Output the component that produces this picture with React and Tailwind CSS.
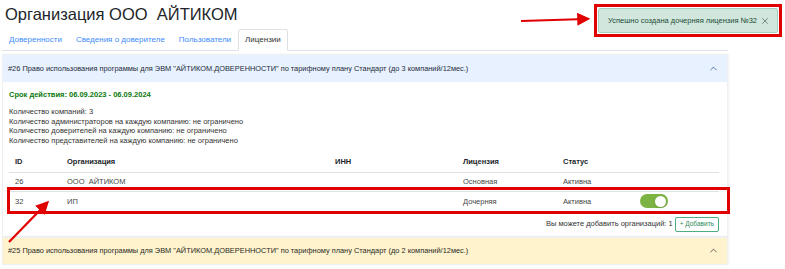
import { ChevronUp, X } from 'lucide-react';

const rows = [
  { id: 26, org: 'ООО  АЙТИКОМ', inn: '', lic: 'Основная', status: 'Активна', toggle: false },
  { id: 32, org: 'ИП', inn: '', lic: 'Дочерняя', status: 'Активна', toggle: true },
];

const limits = [
  'Количество компаний: 3',
  'Количество администраторов на каждую компанию: не ограничено',
  'Количество доверителей на каждую компанию: не ограничено',
  'Количество представителей на каждую компанию: не ограничено',
];

const Toggle = () => (
  <div className="w-[28px] h-[14px] rounded-full bg-[#7cb342] flex items-center justify-end px-[2px]">
    <div className="w-[11px] h-[11px] rounded-full bg-white shadow-sm" />
  </div>
);

export default function App() {
  return (
    <div
      className="relative w-[785px] h-[269px] overflow-hidden bg-white text-[#212529]"
      style={{ fontFamily: '"Liberation Sans", Arial, sans-serif' }}
    >
      <h1 className="pl-[5px] pt-[1px] text-[16.5px] leading-[26px] whitespace-pre">Организация ООО  АЙТИКОМ</h1>

      <div className="ml-[2px] w-[726px]">
        {/* tabs */}
        <div className="flex border-b border-[#dee2e6] mt-[2px] text-[8px] leading-[19px]">
          <div className="px-[6px] text-[#3d8bfd] border border-transparent">Доверенности</div>
          <div className="px-[6px] text-[#3d8bfd] border border-transparent">Сведения о доверителе</div>
          <div className="px-[6px] text-[#3d8bfd] border border-transparent">Пользователи</div>
          <div className="px-[6px] text-[#333] bg-white border border-[#dee2e6] border-b-white rounded-t-[3px] -mb-px">Лицензии</div>
        </div>

        {/* license 26 */}
        <div className="mt-[3px] border border-[#eef0f2] shadow-[1px_0_2px_rgba(0,0,0,0.06)]">
          <div className="h-[27px] bg-[#e7f1ff] flex items-center justify-between pl-[5px] pr-[8px] text-[7.4px] text-[#1e2b3a]">
            <span>#26 Право использования программы для ЭВМ "АЙТИКОМ.ДОВЕРЕННОСТИ" по тарифному плану Стандарт (до 3 компаний/12мес.)</span>
            <ChevronUp className="w-[11px] h-[11px] text-[#4a6a90]" strokeWidth={2} />
          </div>
          <div className="px-[6px] pt-[7px] pb-[4px] text-[7.5px]">
            <div className="font-bold text-[#0b7a0b] leading-[12px]">Срок действия: 06.09.2023 - 06.09.2024</div>
            <div className="mt-[6px] leading-[9.5px] text-[#333]">
              {limits.map((l) => (
                <div key={l}>{l}</div>
              ))}
            </div>

            <table className="w-[710px] mt-[7px] border-collapse text-[7.5px]">
              <thead>
                <tr className="h-[20px] border-b border-[#dee2e6] text-left">
                  <th className="pl-[6px] w-[58px] font-bold">ID</th>
                  <th className="w-[268px] font-bold">Организация</th>
                  <th className="w-[128px] font-bold">ИНН</th>
                  <th className="w-[100px] font-bold">Лицензия</th>
                  <th className="w-[77px] font-bold">Статус</th>
                  <th />
                </tr>
              </thead>
              <tbody className="text-[#444]">
                {rows.map((r) => (
                  <tr key={r.id} className="h-[19.5px] border-b border-[#dee2e6]">
                    <td className="pl-[6px]">{r.id}</td>
                    <td className="whitespace-pre">{r.org}</td>
                    <td>{r.inn}</td>
                    <td>{r.lic}</td>
                    <td>{r.status}</td>
                    <td>{r.toggle && <Toggle />}</td>
                  </tr>
                ))}
              </tbody>
            </table>

            <div className="w-[710px] flex justify-end items-center gap-[2px] mt-[5px]">
              <span className="text-[7.5px] text-[#333]">Вы можете добавить организаций: 1</span>
              <button className="h-[15px] px-[4px] border border-[#4caf7d] rounded-[2px] text-[6.5px] text-[#2e8b57] leading-none">
                + Добавить
              </button>
            </div>
          </div>
        </div>

        {/* license 25 */}
        <div className="border border-[#eef0f2] shadow-[1px_0_2px_rgba(0,0,0,0.06)]">
          <div className="h-[26px] bg-[#fff3cd] flex items-center justify-between pl-[5px] pr-[8px] text-[7.4px] text-[#2a2a1e]">
            <span>#25 Право использования программы для ЭВМ "АЙТИКОМ.ДОВЕРЕННОСТИ" по тарифному плану Стандарт (до 2 компаний/12мес.)</span>
            <ChevronUp className="w-[11px] h-[11px] text-[#555]" strokeWidth={2} />
          </div>
        </div>
      </div>

      {/* toast */}
      <div className="absolute left-[594px] top-[4px] w-[188px] h-[33px] border-[3px] border-[#e00000] p-[1px]">
        <div className="h-full bg-[#d1e7dd] border border-[#a3cfbb] rounded-[2px] flex items-center justify-between pl-[9px] pr-[7px] text-[7.5px] text-[#1d4a35] whitespace-nowrap">
          <span>Успешно создана дочерняя лицензия №32</span>
          <X className="w-[10px] h-[10px] text-[#3b5a4b]" strokeWidth={1.5} />
        </div>
      </div>

      {/* highlight of row 32 */}
      <div className="absolute left-[7px] top-[187px] w-[723px] h-[27px] border-[3px] border-[#e00000]" />

      {/* annotation arrows */}
      <svg className="absolute inset-0 pointer-events-none" width="785" height="269">
        <defs>
          <marker id="ah" markerWidth="6" markerHeight="6" refX="4" refY="3" orient="auto" markerUnits="strokeWidth">
            <path d="M0,0 L6,3 L0,6 Z" fill="#e00000" />
          </marker>
        </defs>
        <line x1="521" y1="21" x2="586" y2="19" stroke="#e00000" strokeWidth="2.2" markerEnd="url(#ah)" />
        <line x1="9" y1="242" x2="46" y2="204" stroke="#e00000" strokeWidth="2.2" markerEnd="url(#ah)" />
      </svg>
    </div>
  );
}
